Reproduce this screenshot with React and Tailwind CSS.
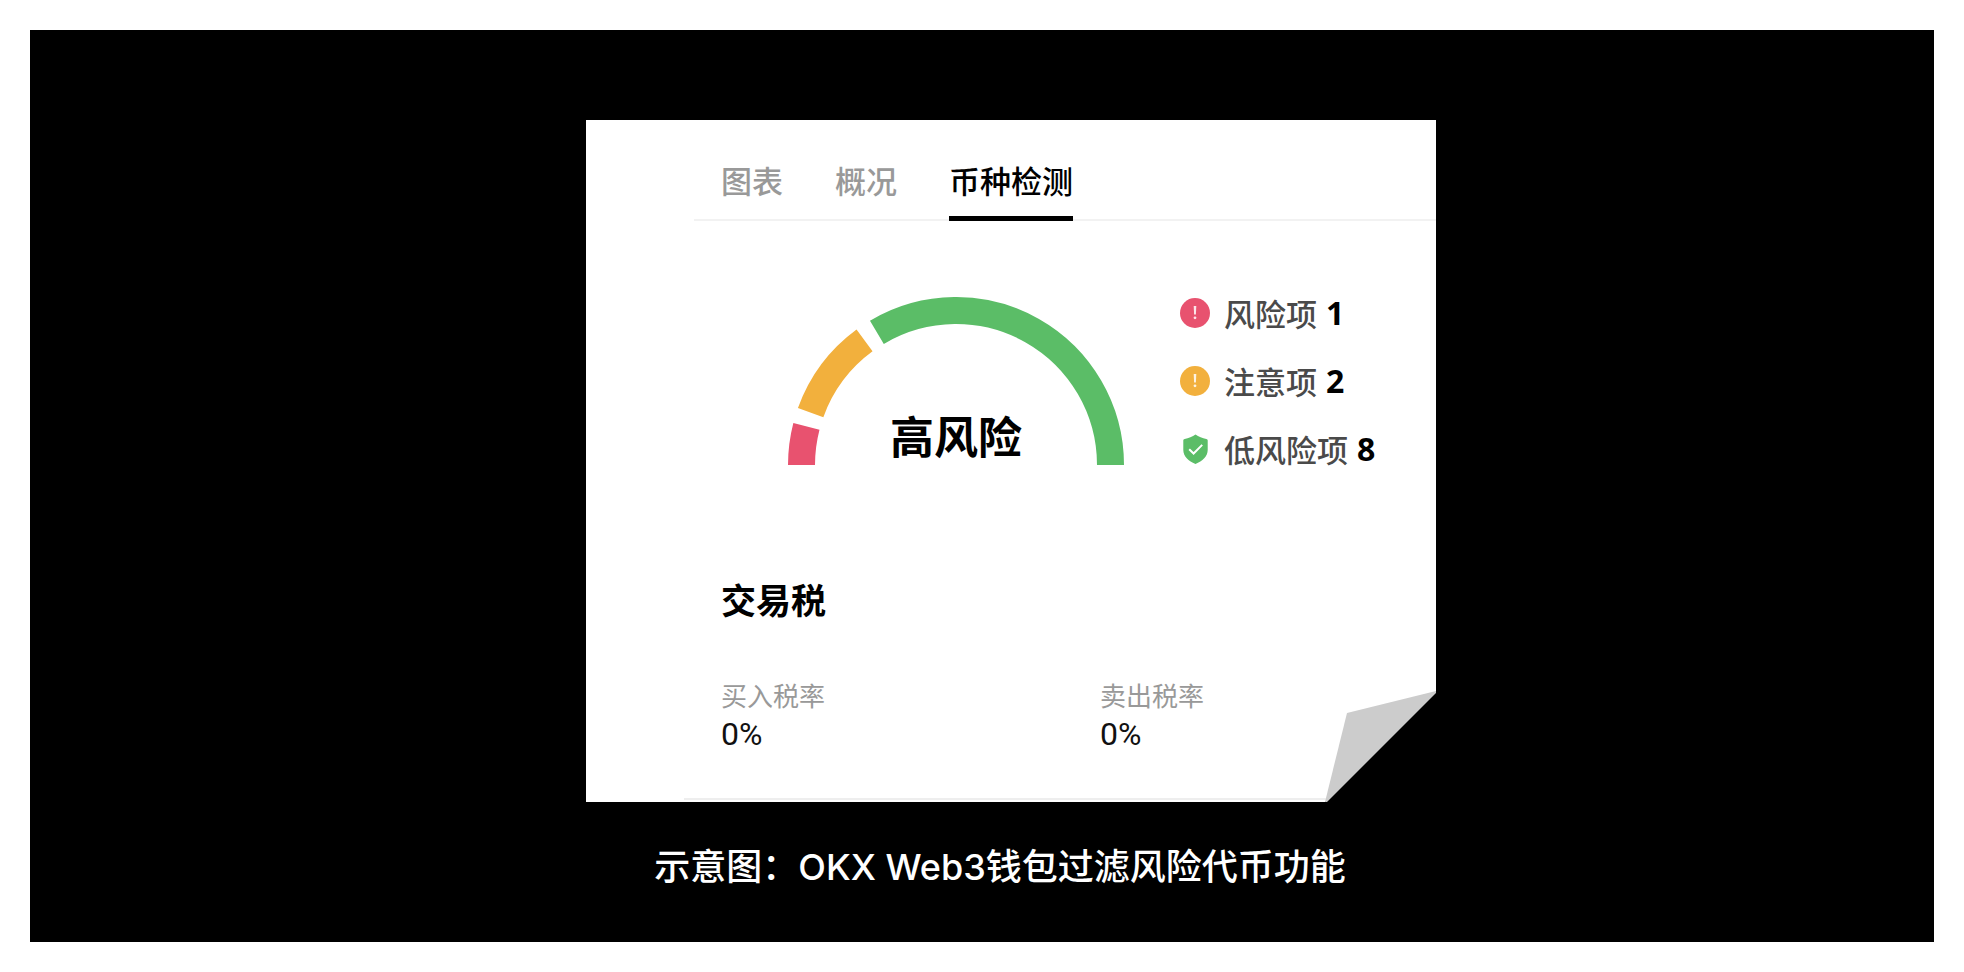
import React from "react";
import clsx from "clsx";

const tabs = [
  { name: "图表", active: false },
  { name: "概况", active: false },
  { name: "币种检测", active: true },
];

// angles in degrees, measured clockwise from the left end of the gauge
const segments = [
  { from: 0, to: 14.5, color: "#e8526f" },
  { from: 19.8, to: 53.7, color: "#f2b03d" },
  { from: 59.2, to: 180, color: "#5bbd67" },
];

const taxes = [
  { label: "买入税率", value: "0%" },
  { label: "卖出税率", value: "0%" },
];

const point = (angle) => {
  const rad = (angle * Math.PI) / 180;
  return `${168 - 154.5 * Math.cos(rad)} ${168 - 154.5 * Math.sin(rad)}`;
};

const AlertIcon = ({ color }) => (
  <svg viewBox="0 0 30 30" className="w-[30px] h-[30px]" aria-hidden="true">
    <circle cx="15" cy="15" r="15" fill={color} />
    <path d="M13.7 8h2.6l-.4 8.6h-1.8z" fill="#fff" fillOpacity="0.85" />
    <circle cx="15" cy="19.8" r="1.4" fill="#fff" fillOpacity="0.85" />
  </svg>
);

const ShieldIcon = () => (
  <svg viewBox="0 0 30 30" className="w-[30px] h-[30px]" aria-hidden="true">
    <path
      d="M15.5 0.5c3 2.2 7 3.8 10.8 4.4.9.2 1.4.7 1.4 1.6V16c0 6.200-5.200 11.200-12.200 14-7-2.800-12.200-7.800-12.200-14V6.500c0-.9.500-1.400 1.400-1.600C8.500 4.300 12.500 2.700 15.500.5z"
      fill="#5bbd67"
    />
    <path
      d="M9.200 15.200l4.400 4.300 8.600-8.600"
      fill="none"
      stroke="#fff"
      strokeWidth="2"
    />
  </svg>
);

const Gauge = () => (
  <div className="relative w-[336px] shrink-0">
    <svg viewBox="0 0 336 168" className="block w-full" aria-hidden="true">
      {segments.map(({ from, to, color }) => (
        <path
          key={color}
          d={`M${point(from)}A154.5 154.5 0 0 1 ${point(to)}`}
          fill="none"
          stroke={color}
          strokeWidth="27"
        />
      ))}
    </svg>
    <p className="absolute inset-x-0 bottom-0 text-center text-[44px] leading-[60px] font-bold text-black">
      高风险
    </p>
  </div>
);

const LegendItem = ({ icon, label, count }) => (
  <li className="flex items-center leading-9 whitespace-nowrap">
    {icon}
    <span className="ml-[14px] text-[31px] font-medium text-[#4a4a4a]">
      {label}
    </span>
    <span className="ml-[9px] text-[32px] font-bold text-black font-['Noto_Sans',sans-serif]">
      {count}
    </span>
  </li>
);

const TokenCard = () => (
  <div className="relative bg-white pt-9 pb-[2px]">
    <div
      role="tablist"
      className="ml-[108px] pl-[27px] flex gap-[52px] border-b-2 border-[#f2f2f2]"
    >
      {tabs.map(({ name, active }) => (
        <button
          key={name}
          type="button"
          role="tab"
          aria-selected={active}
          className={clsx(
            "-mb-[2px] pb-3 border-b-[5px] text-[31px] leading-[48px] font-medium cursor-pointer",
            active
              ? "border-black text-black"
              : "border-transparent text-[#999]"
          )}
        >
          {name}
        </button>
      ))}
    </div>

    <div className="pl-[202px] pt-[74px] flex items-center gap-14">
      <Gauge />
      <ul className="flex flex-col gap-8">
        <LegendItem
          icon={<AlertIcon color="#e8526f" />}
          label="风险项"
          count={1}
        />
        <LegendItem
          icon={<AlertIcon color="#f2b03d" />}
          label="注意项"
          count={2}
        />
        <LegendItem icon={<ShieldIcon />} label="低风险项" count={8} />
      </ul>
    </div>

    <h2 className="mt-[110px] pl-[135px] text-[35px] leading-[44px] font-bold text-black">
      交易税
    </h2>
    <div className="ml-[98px] pl-[37px] pt-[58px] pb-10 grid grid-cols-[379px_1fr] border-b-2 border-[#eee]">
      {taxes.map(({ label, value }) => (
        <dl key={label}>
          <dt className="text-[26px] leading-8 text-[#999]">{label}</dt>
          <dd className="text-[32px] leading-[47px] text-[#111] font-[Roboto,sans-serif]">
            {value}
          </dd>
        </dl>
      ))}
    </div>

    {/* folded corner */}
    <svg
      viewBox="0 0 111 111"
      className="absolute right-0 bottom-0 w-[111px] h-[111px]"
      aria-hidden="true"
    >
      <path d="M111 1v110H0z" fill="#000" />
      <path d="M111 0v2L2 111H0l22-89z" fill="#ccc" />
    </svg>
  </div>
);

const App = () => {
  return (
    <main className="min-h-screen flex p-[30px] bg-white font-['Noto_Sans_CJK_SC',sans-serif]">
      <section className="grow bg-black pt-[90px] pb-[50px] pl-[58px]">
        <figure className="mx-auto w-full max-w-[850px]">
          <TokenCard />
          <figcaption className="mt-[41px] pr-[22px] text-center text-4xl leading-[48px] font-medium text-white font-[Inter,'Noto_Sans_CJK_SC',sans-serif]">
            示意图：OKX Web3钱包过滤风险代币功能
          </figcaption>
        </figure>
      </section>
    </main>
  );
};

export default App;
